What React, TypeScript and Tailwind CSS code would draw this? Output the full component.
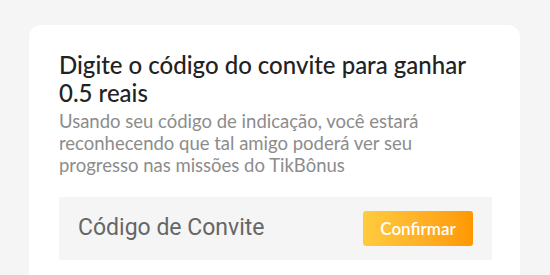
import React from 'react';

export default function App() {
  return (
    <div className="w-[550px] h-[275px] overflow-hidden bg-[#f5f5f5] pt-[25px] pl-[29px] pr-[30px] font-['Lato','Open_Sans',sans-serif]">
      <div className="h-[270px] rounded-t-[12px] bg-white pl-[30px] pr-[28px] pt-[26px]">
        {/* Title */}
        <h1 className="text-[24px] leading-[28px] font-medium text-[#222222]">
          Digite o código do convite para ganhar 0.5 reais
        </h1>
        <p className="mt-[3px] text-[18.5px] leading-[22px] text-[#8c8c8c]">
          Usando seu código de indicação, você estará reconhecendo que tal amigo poderá ver seu progresso nas missões do TikBônus
        </p>

        {/* Invite code input */}
        <div className="mt-[21px] flex h-[63px] items-center justify-between bg-[#f5f5f5] pl-[19px] pr-[19px]">
          <span className="font-['Roboto',sans-serif] text-[23px] text-[#666666]">Código de Convite</span>
          <button className="h-[35px] w-[110px] rounded-[3px] bg-gradient-to-r from-[#ffcb3d] to-[#ff9800] text-[17px] font-semibold text-white">
            Confirmar
          </button>
        </div>
      </div>
    </div>
  );
}
